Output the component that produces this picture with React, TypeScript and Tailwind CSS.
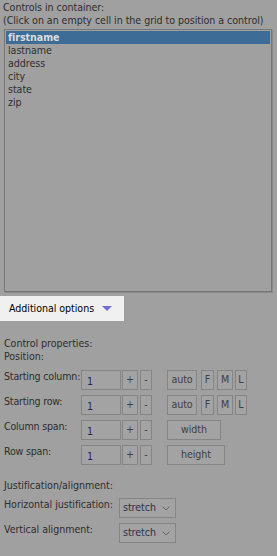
import React from 'react'

const items = ['firstname', 'lastname', 'address', 'city', 'state', 'zip']

function Btn({ w, label }: { w: string; label: string }) {
  return (
    <div
      className={`${w} h-[20px] border border-[#858585] bg-[#a3a3a3] text-[#404040] flex items-center justify-center`}
    >
      {label}
    </div>
  )
}

function Row({ label, extra }: { label: string; extra: React.ReactNode }) {
  return (
    <div className="flex items-start h-[20px]">
      <div className="w-[77px] whitespace-nowrap leading-[13px] tracking-[-0.2px]">{label}</div>
      <div className="w-[40px] h-[20px] border border-[#858585] bg-[#a3a3a3] text-[#262650] pl-[5px] pt-[4px] leading-[13px]">
        1
      </div>
      <div className="ml-[1px]">
        <Btn w="w-[16px]" label="+" />
      </div>
      <div className="ml-[2px]">
        <Btn w="w-[12px]" label="-" />
      </div>
      <div className="ml-[15px] flex">{extra}</div>
    </div>
  )
}

function Select({ label }: { label: string }) {
  return (
    <div className="flex items-start h-[20px]">
      <div className="w-[115px] whitespace-nowrap leading-[13px]">{label}</div>
      <div className="w-[57px] h-[20px] border border-[#858585] bg-[#a3a3a3] text-[#30304a] flex items-center justify-between pl-[3px] pr-[5px]">
        <span>stretch</span>
        <svg width="8" height="5" viewBox="0 0 8 5" fill="none">
          <path d="M0.5 0.5 L4 4 L7.5 0.5" stroke="#666" strokeWidth="1" />
        </svg>
      </div>
    </div>
  )
}

export default function App() {
  return (
    <div
      className="w-[277px] h-[556px] bg-[#a0a0a0] text-[#2e2e2e] text-[10.6px] tracking-[-0.05px] overflow-hidden"
      style={{ fontFamily: '"DejaVu Sans Condensed", "Liberation Sans", Arial, sans-serif' }}
    >
      <div className="px-[3px] pt-[1px] leading-[13px] whitespace-nowrap">
        <div>Controls in container:</div>
        <div>(Click on an empty cell in the grid to position a control)</div>
      </div>

      {/* Список контролов */}
      <div className="mx-[4px] mt-[2px] h-[263px] w-[268px] border border-[#777] shadow-[1px_1px_0_#8a8a8a] p-[1px]">
        {items.map((it, i) => (
          <div
            key={it}
            className={
              i === 0
                ? 'h-[13px] leading-[13px] pl-[2px] bg-[#3d6c96] text-[#dcdcdc] font-bold'
                : 'h-[13px] leading-[13px] pl-[2px]'
            }
          >
            {it}
          </div>
        ))}
      </div>

      {/* Кнопка дополнительных опций */}
      <div className="mt-[4px] w-[124px] h-[25px] bg-[#f0f0f0] flex items-center pl-[9px] text-[10.6px] text-black">
        <span>Additional options</span>
        <svg className="ml-[8px]" width="10" height="6" viewBox="0 0 10 6">
          <path d="M0 0 L10 0 L5 5 Z" fill="#6e6ed6" />
        </svg>
      </div>

      <div className="px-[4px] pt-[16px] leading-[13px]">
        <div>Control properties:</div>
        <div>Position:</div>
      </div>

      <div className="pl-[4px] mt-[7px] flex flex-col gap-[5px]">
        <Row
          label="Starting column:"
          extra={
            <>
              <Btn w="w-[30px]" label="auto" />
              <div className="ml-[4px]"><Btn w="w-[13px]" label="F" /></div>
              <div className="ml-[3px]"><Btn w="w-[16px]" label="M" /></div>
              <div className="ml-[2px]"><Btn w="w-[12px]" label="L" /></div>
            </>
          }
        />
        <Row
          label="Starting row:"
          extra={
            <>
              <Btn w="w-[30px]" label="auto" />
              <div className="ml-[4px]"><Btn w="w-[13px]" label="F" /></div>
              <div className="ml-[3px]"><Btn w="w-[16px]" label="M" /></div>
              <div className="ml-[2px]"><Btn w="w-[12px]" label="L" /></div>
            </>
          }
        />
        <Row label="Column span:" extra={<Btn w="w-[54px]" label="width" />} />
        <Row label="Row span:" extra={<Btn w="w-[58px]" label="height" />} />
      </div>

      <div className="px-[4px] pt-[14px] leading-[13px]">Justification/alignment:</div>
      <div className="pl-[4px] mt-[6px] flex flex-col gap-[5px]">
        <Select label="Horizontal justification:" />
        <Select label="Vertical alignment:" />
      </div>
    </div>
  )
}
